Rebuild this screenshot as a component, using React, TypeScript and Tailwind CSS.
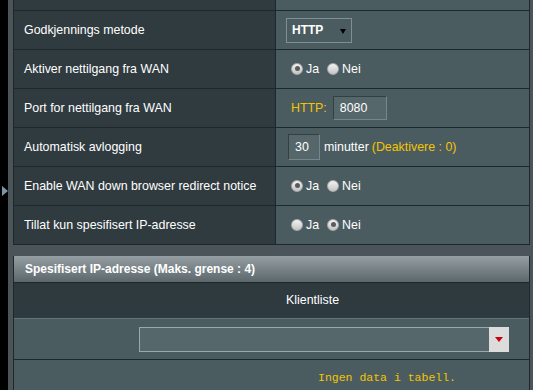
import type { ReactNode } from 'react';

const Radio = ({ checked }: { checked?: boolean }) => (
  <span className="relative inline-flex items-center justify-center w-[12px] h-[12px] rounded-full border border-[#a8a8a8] bg-[linear-gradient(#f2f2f2,#c4c4c4)]">
    {checked && <span className="w-[5px] h-[5px] rounded-full bg-[#5a5a5a]" />}
  </span>
);

const RadioPair = ({ yes }: { yes: boolean }) => (
  <div className="flex items-center pl-[15px] text-[12.4px] text-white">
    <Radio checked={yes} />
    <span className="ml-[3px]">Ja</span>
    <span className="ml-[8px] flex items-center">
      <Radio checked={!yes} />
    </span>
    <span className="ml-[3px]">Nei</span>
  </div>
);

const Row = ({ label, children }: { label: string; children: ReactNode }) => (
  <div className="flex h-[39px] border-b border-[#1e272a]">
    <div className="w-[262px] shrink-0 flex items-center pl-[10px] bg-[#303b40] border-r border-[#1e272a] text-[12.4px] text-white">
      {label}
    </div>
    <div className="flex-1 flex items-center bg-[#4b5c61]">{children}</div>
  </div>
);

const App = () => {
  return (
    <div
      className="w-[533px] h-[390px] overflow-hidden bg-black flex"
      style={{ fontFamily: '"Liberation Sans", Arial, sans-serif' }}
    >
      {/* left black gutter with arrow */}
      <div className="w-[8px] shrink-0 relative">
        <span className="absolute left-[2px] top-[186px] w-0 h-0 border-y-[5px] border-y-transparent border-l-[6px] border-l-[#7d95a5]" />
      </div>

      <div className="flex-1 bg-[#4b5458] pl-[5px] pr-[3px]">
        <div className="border-l border-r border-[#1e272a]">
          {/* partial top row */}
          <div className="flex h-[11px] border-b border-[#1e272a]">
            <div className="w-[262px] shrink-0 bg-[#303b40] border-r border-[#1e272a]" />
            <div className="flex-1 bg-[#4b5c61]" />
          </div>

          <Row label="Godkjennings metode">
            <div className="ml-[10px] w-[66px] h-[25px] border border-[#7f8f94] flex items-center pl-[5px] relative">
              <span className="text-[12px] font-bold text-white">HTTP</span>
              <span className="absolute left-[53px] top-[10px] w-0 h-0 border-x-[3px] border-x-transparent border-t-[5px] border-t-black" />
            </div>
          </Row>

          <Row label="Aktiver nettilgang fra WAN">
            <RadioPair yes />
          </Row>

          <Row label="Port for nettilgang fra WAN">
            <div className="flex items-center pl-[15px] text-[12.4px]">
              <span className="text-[#f5c400]">HTTP:</span>
              <div className="ml-[6px] w-[54px] h-[24px] bg-[#56676c] border-l border-t border-[#33403f] border-b border-r border-b-[#76868a] border-r-[#76868a] flex items-center pl-[6px] text-white">
                8080
              </div>
            </div>
          </Row>

          <Row label="Automatisk avlogging">
            <div className="flex items-center pl-[12px] text-[12.4px]">
              <div className="w-[32px] h-[26px] bg-[#56676c] border-l border-t border-[#33403f] border-b border-r border-b-[#76868a] border-r-[#76868a] flex items-center pl-[6px] text-white">
                30
              </div>
              <span className="ml-[4px] text-white">minutter</span>
              <span className="ml-[3px] text-[#f5c400]">(Deaktivere : 0)</span>
            </div>
          </Row>

          <Row label="Enable WAN down browser redirect notice">
            <RadioPair yes />
          </Row>

          <Row label="Tillat kun spesifisert IP-adresse">
            <RadioPair yes={false} />
          </Row>
        </div>

        {/* gap */}
        <div className="h-[11px]" />

        <div className="border-l border-r border-[#1e272a]">
          <div className="h-[27px] flex items-center pl-[11px] bg-[linear-gradient(#959fa3,#5c676b)] border-b border-[#1e272a] text-[12px] font-bold text-white">
            Spesifisert IP-adresse (Maks. grense : 4)
          </div>
          <div className="h-[35px] flex items-center pl-[272px] bg-[#2f3a3f] text-[12.4px] text-white">
            Klientliste
          </div>
          <div className="h-[42px] flex items-center pl-[125px] bg-[#4b5c61] border-t border-[#637479] border-b border-b-[#1e272a]">
            <div className="w-[350px] h-[25px] bg-[#56676c] border border-[#9aa8ac] border-r-0" />
            <div className="w-[20px] h-[25px] bg-[#dcdcdc] flex items-center justify-center">
              <span className="w-0 h-0 border-x-[4px] border-x-transparent border-t-[5px] border-t-[#c4000c]" />
            </div>
          </div>
          <div
            className="h-[40px] pt-[9px] pl-[304px] bg-[#4b5c61] text-[11.5px] text-[#f5c400]"
            style={{ fontFamily: '"Liberation Mono", "Courier New", monospace' }}
          >
            Ingen data i tabell.
          </div>
        </div>
      </div>
    </div>
  );
};

export default App;
